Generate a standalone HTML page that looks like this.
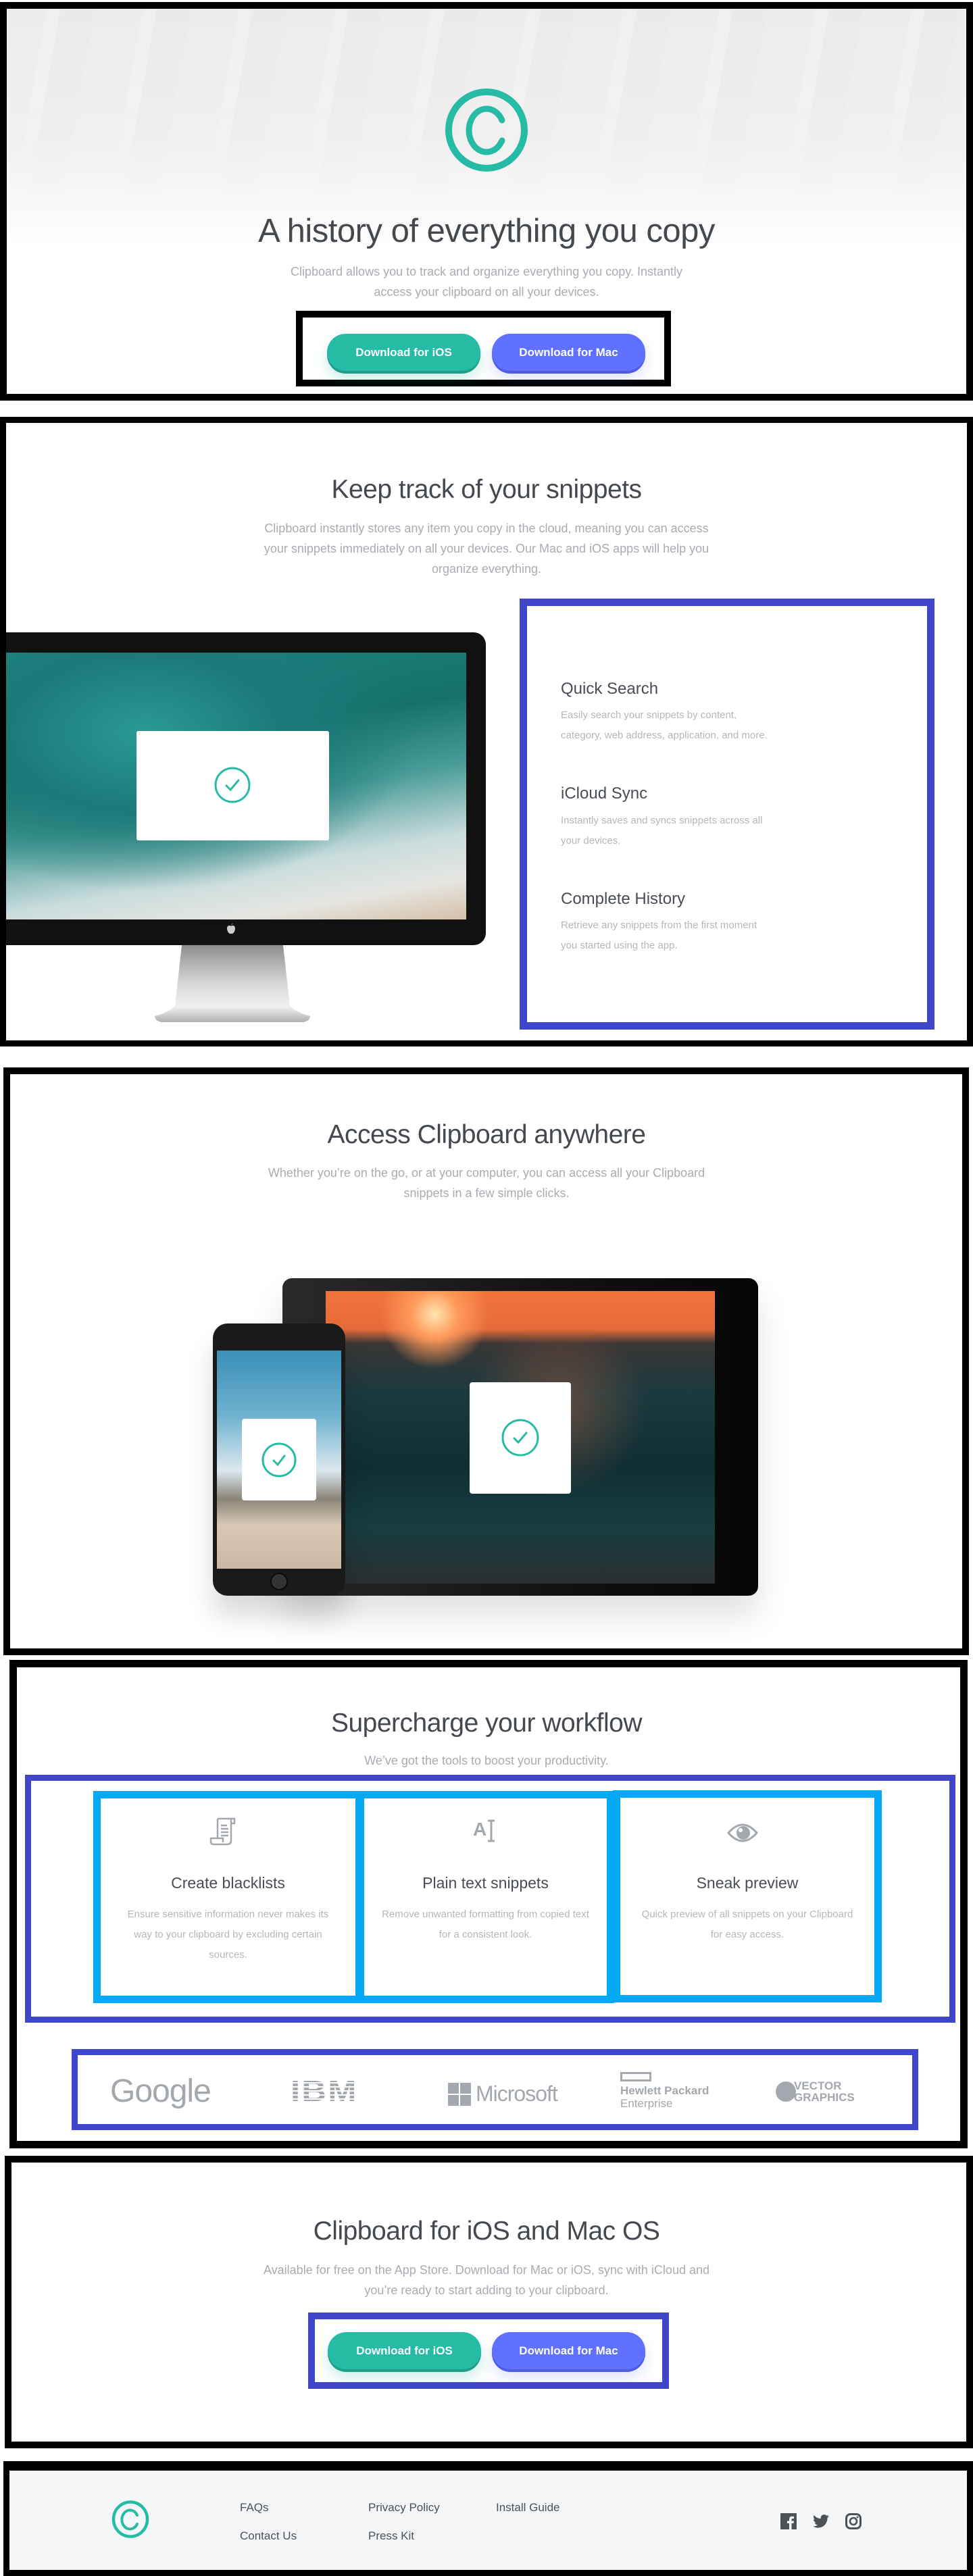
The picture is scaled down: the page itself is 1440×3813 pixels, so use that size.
<!DOCTYPE html>
<html><head><meta charset="utf-8">
<style>
*{margin:0;padding:0;box-sizing:border-box}
body{width:1440px;height:3808px;position:relative;background:#fff;font-family:"Liberation Sans",sans-serif;overflow:hidden}
.a{position:absolute}
.box{position:absolute;border-style:solid}
.h{position:absolute;left:0;width:1440px;text-align:center;color:#444950;letter-spacing:-0.5px}
.p{position:absolute;left:0;width:1440px;text-align:center;color:#a8acb2;font-size:18px;line-height:30px}
.btn{position:absolute;height:55px;width:227px;border-radius:28px;color:#fff;font-size:17px;font-weight:bold;text-align:center;line-height:55px}
.ios{background:#26bba5;box-shadow:0 4px 0 #1f9f8b,0 12px 20px rgba(38,187,165,.25)}
.mac{background:#6070ff;box-shadow:0 4px 0 #4d5ce0,0 12px 20px rgba(96,112,255,.2)}
.ft{position:absolute;font-size:24px;color:#484d55}
.fd{position:absolute;font-size:15px;color:#b3b7bc;line-height:30px}
.ct{position:absolute;font-size:23px;color:#484d55;text-align:center}
.cd{position:absolute;font-size:15px;color:#b3b7bc;line-height:30px;text-align:center}
.card{position:absolute;background:#fff;border-radius:4px}
.lk{position:absolute;font-size:17px;color:#4c5156}
</style></head><body>

<!-- HERO -->
<div class="a" style="left:0;top:3px;width:1440px;height:590px;background:linear-gradient(180deg,#ececed 0%,#f0f0f1 35%,#f9f9f9 52%,#fff 62%)"></div>
<div class="a" style="left:0;top:3px;width:1440px;height:320px;background:repeating-linear-gradient(100deg,rgba(255,255,255,0) 0 70px,rgba(255,255,255,.18) 70px 90px,rgba(0,0,0,.008) 90px 140px);-webkit-mask-image:linear-gradient(#000 50%,transparent)"></div>
<div class="box" style="left:0;top:3px;width:1440px;height:590px;border-width:10px;border-color:#000"></div>
<svg class="a" style="left:658px;top:130px" width="124" height="125" viewBox="0 0 124 125"><ellipse cx="62" cy="62.5" rx="56" ry="56.5" fill="none" stroke="#26bba5" stroke-width="10"/><path d="M85 48 A26 32 0 1 0 85 78" fill="none" stroke="#26bba5" stroke-width="9" stroke-linecap="round"/></svg>
<div class="h" style="top:313px;font-size:49px;line-height:58px">A history of everything you copy</div>
<div class="p" style="top:387px">Clipboard allows you to track and organize everything you copy. Instantly<br>access your clipboard on all your devices.</div>
<div class="box" style="left:438px;top:460px;width:555px;height:112px;border-width:10px;border-color:#000"></div>
<div class="btn ios" style="left:484px;top:494px">Download for iOS</div>
<div class="btn mac" style="left:728px;top:494px">Download for Mac</div>

<!-- SECTION 2 -->
<div class="box" style="left:0;top:617px;width:1440px;height:932px;border-width:9px;border-color:#000"></div>
<div class="h" style="top:701px;font-size:39px;line-height:48px">Keep track of your snippets</div>
<div class="p" style="top:767px">Clipboard instantly stores any item you copy in the cloud, meaning you can access<br>your snippets immediately on all your devices. Our Mac and iOS apps will help you<br>organize everything.</div>
<!-- monitor -->
<div class="a" style="left:9px;top:936px;width:710px;height:463px;background:#111;border-radius:0 18px 18px 0"></div>
<div class="a" style="left:9px;top:966px;width:681px;height:395px;background:radial-gradient(ellipse at 30% 30%,#2a9a92 0%,#1b7a78 30%,transparent 60%),linear-gradient(170deg,#1e8a84 0%,#15706c 35%,#4a9c98 55%,#c9dcdc 75%,#e6e6e2 88%,#d4c0a8 100%)"></div>
<div class="a" style="left:202px;top:1082px;width:285px;height:162px;background:#fff;border-radius:3px"></div>
<svg class="a" style="left:316px;top:1134px" width="56" height="56" viewBox="0 0 56 56"><circle cx="28" cy="28" r="25" fill="none" stroke="#26bba5" stroke-width="3"/><path d="M19 29 L25 35 L37 21" fill="none" stroke="#26bba5" stroke-width="3" stroke-linecap="round"/></svg>
<svg class="a" style="left:334px;top:1366px" width="16" height="18" viewBox="0 0 16 18"><path d="M8 5 C10 3 14 4 14 8 C14 13 11 17 8 16 C5 17 2 13 2 8 C2 4 6 3 8 5Z M8 4 Q9 1 11 1" fill="#ccc"/></svg>
<svg class="a" style="left:229px;top:1399px" width="230" height="115" viewBox="0 0 230 115"><defs><linearGradient id="st" x1="0" y1="0" x2="0" y2="1"><stop offset="0" stop-color="#8e8e8e"/><stop offset=".5" stop-color="#d8d8d8"/><stop offset=".8" stop-color="#f0f0f0"/><stop offset="1" stop-color="#b0b0b0"/></linearGradient></defs><path d="M40 0 H190 L200 90 Q210 100 230 105 Q230 112 220 114 H10 Q0 112 0 105 Q20 100 30 90 Z" fill="url(#st)"/></svg>
<div class="box" style="left:769px;top:886px;width:614px;height:638px;border-width:11px;border-color:#3f46c9"></div>
<div class="ft" style="left:830px;top:1006px">Quick Search</div>
<div class="fd" style="left:830px;top:1044px">Easily search your snippets by content,<br>category, web address, application, and more.</div>
<div class="ft" style="left:830px;top:1161px">iCloud Sync</div>
<div class="fd" style="left:830px;top:1200px">Instantly saves and syncs snippets across all<br>your devices.</div>
<div class="ft" style="left:830px;top:1317px">Complete History</div>
<div class="fd" style="left:830px;top:1355px">Retrieve any snippets from the first moment<br>you started using the app.</div>

<!-- SECTION 3 -->
<div class="box" style="left:5px;top:1580px;width:1429px;height:870px;border-width:10px;border-color:#000"></div>
<div class="h" style="top:1656px;font-size:39px;line-height:48px">Access Clipboard anywhere</div>
<div class="p" style="top:1721px">Whether you’re on the go, or at your computer, you can access all your Clipboard<br>snippets in a few simple clicks.</div>
<div class="a" style="left:418px;top:1892px;width:704px;height:470px;background:linear-gradient(90deg,#2a2a2a,#111 60%,#050505);border-radius:14px;box-shadow:0 30px 50px rgba(0,0,0,.12)"></div>
<div class="a" style="left:482px;top:1911px;width:576px;height:433px;background:radial-gradient(circle at 28% 8%,#ffe6b0 0,#ff9a5a 6%,transparent 14%),radial-gradient(circle at 60% 40%,rgba(230,110,70,.35) 0,transparent 30%),linear-gradient(180deg,#f2743c 0%,#e76a3a 13%,#3a3636 18%,#1b3a3e 35%,#0f2e33 60%,#173d40 80%,#2a2f30 100%)"></div>
<div class="card" style="left:695px;top:2046px;width:150px;height:165px"></div>
<svg class="a" style="left:740px;top:2098px" width="60" height="60" viewBox="0 0 60 60"><circle cx="30" cy="30" r="26" fill="none" stroke="#26bba5" stroke-width="3"/><path d="M21 31 L27 37 L39 23" fill="none" stroke="#26bba5" stroke-width="3" stroke-linecap="round"/></svg>
<div class="a" style="left:315px;top:1959px;width:196px;height:403px;background:#1a1a1a;border-radius:22px;box-shadow:0 30px 40px rgba(0,0,0,.15)"></div>
<div class="a" style="left:321px;top:1999px;width:184px;height:323px;background:linear-gradient(180deg,#3a8fb8 0%,#6fb2cf 30%,#dce8ee 55%,#8a8478 68%,#d8c8b4 80%,#c8b8a4 100%)"></div>
<div class="card" style="left:358px;top:2100px;width:110px;height:121px"></div>
<svg class="a" style="left:386px;top:2134px" width="54" height="54" viewBox="0 0 54 54"><circle cx="27" cy="27" r="24" fill="none" stroke="#26bba5" stroke-width="3"/><path d="M19 28 L25 34 L35 21" fill="none" stroke="#26bba5" stroke-width="3" stroke-linecap="round"/></svg>
<div class="a" style="left:400px;top:2328px;width:26px;height:26px;border-radius:50%;background:#333;border:2px solid #0a0a0a"></div>

<!-- SECTION 4 -->
<div class="box" style="left:14px;top:2457px;width:1418px;height:723px;border-width:11px;border-color:#000"></div>
<div class="h" style="top:2527px;font-size:39px;line-height:48px">Supercharge your workflow</div>
<div class="p" style="top:2591px">We’ve got the tools to boost your productivity.</div>
<div class="box" style="left:37px;top:2627px;width:1377px;height:367px;border-width:9px;border-color:#3f46c9"></div>
<div class="box" style="left:138px;top:2651px;width:399px;height:314px;border-width:11px;border-color:#03a9f4"></div>
<div class="box" style="left:528px;top:2651px;width:381px;height:314px;border-width:11px;border-color:#03a9f4"></div>
<div class="box" style="left:907px;top:2650px;width:398px;height:314px;border-width:11px;border-color:#03a9f4"></div>
<svg class="a" style="left:310px;top:2690px" width="46" height="44" viewBox="0 0 46 44"><path d="M12 2 H32 V34 Q32 40 26 40 H6 Q2 40 2 35 V31 H20 V37" fill="none" stroke="#a2a8ad" stroke-width="2.5"/><path d="M12 2 V31 M32 2 H37 V9 H32" fill="none" stroke="#a2a8ad" stroke-width="2.5"/><path d="M17 12 H26 M17 17 H28 M17 22 H28 M17 27 H28" stroke="#a2a8ad" stroke-width="2.5"/></svg>
<div class="a" style="left:700px;top:2692px;font-size:28px;font-weight:bold;color:#a2a8ad">A</div>
<svg class="a" style="left:721px;top:2693px" width="12" height="34" viewBox="0 0 12 34"><path d="M1 2 H11 M6 2 V32 M1 32 H11" stroke="#a2a8ad" stroke-width="3"/></svg>
<svg class="a" style="left:1076px;top:2697px" width="46" height="32" viewBox="0 0 46 32"><path d="M2 16 Q23 -8 44 16 Q23 40 2 16Z" fill="none" stroke="#a2a8ad" stroke-width="3"/><circle cx="24" cy="16" r="10" fill="#a2a8ad"/><circle cx="20" cy="12" r="3" fill="#fff"/></svg>
<div class="ct" style="left:149px;top:2774px;width:377px">Create blacklists</div>
<div class="cd" style="left:149px;top:2819px;width:377px">Ensure sensitive information never makes its<br>way to your clipboard by excluding certain<br>sources.</div>
<div class="ct" style="left:539px;top:2774px;width:359px">Plain text snippets</div>
<div class="cd" style="left:532px;top:2819px;width:373px">Remove unwanted formatting from copied text<br>for a consistent look.</div>
<div class="ct" style="left:918px;top:2774px;width:376px">Sneak preview</div>
<div class="cd" style="left:918px;top:2819px;width:376px">Quick preview of all snippets on your Clipboard<br>for easy access.</div>
<div class="box" style="left:106px;top:3033px;width:1253px;height:120px;border-width:9px;border-color:#3f46c9"></div>
<div class="a" style="left:163px;top:3068px;font-size:48px;color:#a2a8ad;letter-spacing:-1px">Google</div>
<div class="a" style="left:430px;top:3074px;font-size:44px;line-height:44px;font-weight:bold;color:#a2a8ad;letter-spacing:2px;transform:scaleX(1.15);transform-origin:left">IBM</div>
<div class="a" style="left:428px;top:3078px;width:145px;height:38px;background:repeating-linear-gradient(180deg,transparent 0 4px,#fff 4px 6px)"></div>
<div class="a" style="left:663px;top:3083px;width:34px;height:34px;background:linear-gradient(90deg,#a2a8ad 47%,transparent 47% 53%,#a2a8ad 53%)"></div>
<div class="a" style="left:663px;top:3099px;width:34px;height:2px;background:#fff"></div>
<div class="a" style="left:704px;top:3081px;font-size:32px;color:#a2a8ad;letter-spacing:-1px">Microsoft</div>
<div class="a" style="left:918px;top:3067px;width:46px;height:14px;border:3px solid #a2a8ad"></div>
<div class="a" style="left:918px;top:3085px;font-size:17px;line-height:19px;color:#a2a8ad;font-weight:bold">Hewlett Packard<br><span style="font-weight:normal">Enterprise</span></div>
<div class="a" style="left:1148px;top:3081px;width:30px;height:30px;border-radius:50%;background:#a2a8ad"></div>
<div class="a" style="left:1175px;top:3079px;font-size:17px;line-height:17px;font-weight:bold;color:#a2a8ad">VECTOR<br>GRAPHICS</div>

<!-- SECTION 5 -->
<div class="box" style="left:7px;top:3191px;width:1433px;height:433px;border-width:10px;border-color:#000"></div>
<div class="h" style="top:3279px;font-size:39px;line-height:48px">Clipboard for iOS and Mac OS</div>
<div class="p" style="top:3345px">Available for free on the App Store. Download for Mac or iOS, sync with iCloud and<br>you’re ready to start adding to your clipboard.</div>
<div class="box" style="left:456px;top:3423px;width:534px;height:113px;border-width:10px;border-color:#3f46c9"></div>
<div class="btn ios" style="left:485px;top:3452px">Download for iOS</div>
<div class="btn mac" style="left:728px;top:3452px">Download for Mac</div>

<!-- FOOTER -->
<div class="a" style="left:5px;top:3643px;width:1435px;height:165px;background:#f4f6f8"></div>
<div class="box" style="left:5px;top:3643px;width:1435px;height:170px;border-width:14px 9px 9px 9px;border-color:#000"></div>
<svg class="a" style="left:165px;top:3701px" width="56" height="56" viewBox="0 0 56 56"><ellipse cx="28" cy="28" rx="25" ry="25.5" fill="none" stroke="#26bba5" stroke-width="4.5"/><path d="M38 22 A12 14 0 1 0 38 35" fill="none" stroke="#26bba5" stroke-width="4" stroke-linecap="round"/></svg>
<div class="lk" style="left:355px;top:3702px">FAQs</div>
<div class="lk" style="left:355px;top:3744px">Contact Us</div>
<div class="lk" style="left:545px;top:3702px">Privacy Policy</div>
<div class="lk" style="left:545px;top:3744px">Press Kit</div>
<div class="lk" style="left:734px;top:3702px">Install Guide</div>
<svg class="a" style="left:1155px;top:3720px" width="24" height="24" viewBox="0 0 24 24"><rect width="24" height="24" rx="1" fill="#4c5156"/><path d="M16.5 24 V15 H19.5 L20 11.5 H16.5 V9.5 Q16.5 8 18 8 H20 V5 Q18.5 4.8 17 4.8 Q13 4.8 13 9 V11.5 H10 V15 H13 V24Z" fill="#f4f6f8"/></svg>
<svg class="a" style="left:1203px;top:3722px" width="24" height="20" viewBox="0 0 24 20"><path d="M24 2.4c-.9.4-1.8.6-2.8.8 1-.6 1.8-1.6 2.2-2.7-1 .6-2 1-3.1 1.200C19.3.7 18 .1 16.6.1c-2.7 0-4.9 2.2-4.9 4.9 0 .4 0 .8.1 1.1C7.7 5.9 4.1 4 1.7 1 1.2 1.7 1 2.6 1 3.5c0 1.7.9 3.2 2.2 4.1-.8 0-1.6-.2-2.2-.6v.1c0 2.4 1.700 4.4 3.9 4.8-.4.1-.8.2-1.3.2-.3 0-.6 0-.9-.1.6 2 2.4 3.4 4.6 3.4-1.7 1.3-3.8 2.1-6.1 2.1-.4 0-.8 0-1.2-.1 2.2 1.4 4.8 2.2 7.5 2.2 9.1 0 14-7.5 14-14v-.6c1-.7 1.8-1.6 2.5-2.6z" fill="#4c5156"/></svg>
<svg class="a" style="left:1251px;top:3720px" width="24" height="24" viewBox="0 0 24 24"><rect x="1.5" y="1.5" width="21" height="21" rx="6" fill="none" stroke="#4c5156" stroke-width="3"/><circle cx="12" cy="12" r="5" fill="none" stroke="#4c5156" stroke-width="2.6"/><circle cx="18" cy="6" r="1.4" fill="#4c5156"/></svg>
</body></html>
